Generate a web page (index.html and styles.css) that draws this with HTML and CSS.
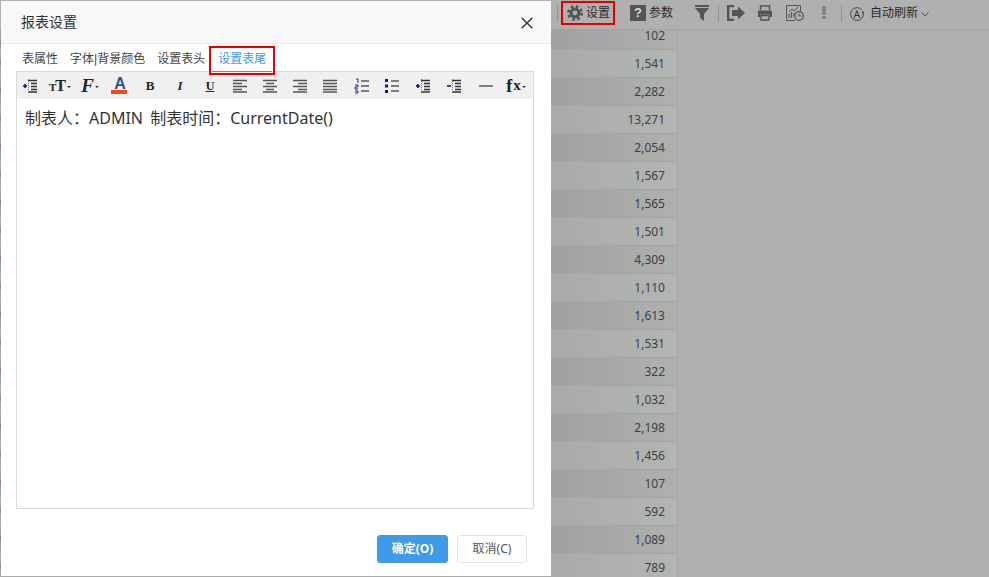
FILE: index.html
```html
<!DOCTYPE html>
<html lang="zh-CN">
<head>
<meta charset="utf-8">
<title>报表设置</title>
<link rel="stylesheet" href="styles.css">
</head>
<body>
<div class="page">
  <header class="topbar">
    <span class="vsep"></span>
    <div class="tool tool-settings">
      <svg class="ic16" viewBox="0 0 16 16"><circle cx="8" cy="8" r="6.3" fill="none" stroke="#555" stroke-width="3.2" stroke-dasharray="2.5 2.45"/><circle cx="8" cy="8" r="3.9" fill="none" stroke="#555" stroke-width="3"/></svg>
      <span>设置</span>
    </div>
    <div class="tool tool-param"><span class="qmark">?</span><span>参数</span></div>
    <svg class="ic-filter" viewBox="0 0 14 16"><path d="M0 0h14v2H0zM0 3h14L9 9v7l-4-3V9z" fill="#555"/></svg>
    <span class="vsep vsep-a"></span>
    <svg class="ic-exit" viewBox="0 0 18 16"><path d="M7 1H1.200v14H7" fill="none" stroke="#555" stroke-width="2.400"/><path d="M5 5h6V1.500L18 8l-7 6.500V11H5z" fill="#555"/></svg>
    <svg class="ic-print" viewBox="0 0 16 16"><path d="M3.500 5V1h9v4" fill="none" stroke="#555" stroke-width="1.500"/><path d="M1 6.500a1 1 0 0 1 1-1h12a1 1 0 0 1 1 1V12h-2V9.500H3V12H1z" fill="#555"/><path d="M4 10.500h8V15H4z" fill="none" stroke="#555" stroke-width="1.500"/></svg>
    <svg class="ic-chart" viewBox="0 0 18 16"><path d="M9 15.500H.5V.5h14V7" fill="none" stroke="#555"/><path d="M3 13V9M5.500 13V7M8 11V8" stroke="#555" stroke-width="1.200"/><path d="M3 7l3-3 2 2 4-4" fill="none" stroke="#555"/><circle cx="13" cy="11" r="4.300" fill="#b0b0b0" stroke="#555" stroke-width="1.300"/><path d="M13 8.500V11h2.500" fill="none" stroke="#555"/></svg>
    <svg class="ic-warn" viewBox="0 0 4 13"><path d="M0 0h4v9H0zM0 10h4v3H0z" fill="#868686"/></svg>
    <span class="vsep vsep-b"></span>
    <span class="auto-ic"><svg class="auto-ring" viewBox="0 0 14 14"><path d="M11.800 2.800A6.400 6.400 0 1 0 13.400 7" fill="none" stroke="#444"/><path d="M12 4.500h2V6.500h-2z" fill="#444"/></svg><span class="auto-a">A</span></span>
    <span class="auto-text">自动刷新</span>
    <svg class="ic-chev" viewBox="0 0 8 5"><path d="M.5.5 4 4 7.500.5" fill="none" stroke="#555"/></svg>
  </header>

  <main class="report">
    <div class="rows">
      <div class="row">102</div>
      <div class="row">1,541</div>
      <div class="row">2,282</div>
      <div class="row">13,271</div>
      <div class="row">2,054</div>
      <div class="row">1,567</div>
      <div class="row">1,565</div>
      <div class="row">1,501</div>
      <div class="row">4,309</div>
      <div class="row">1,110</div>
      <div class="row">1,613</div>
      <div class="row">1,531</div>
      <div class="row">322</div>
      <div class="row">1,032</div>
      <div class="row">2,198</div>
      <div class="row">1,456</div>
      <div class="row">107</div>
      <div class="row">592</div>
      <div class="row">1,089</div>
      <div class="row">789</div>
    </div>
  </main>

  <section class="dialog">
    <div class="dlg-head">
      <span class="dlg-title">报表设置</span>
      <svg class="dlg-close" viewBox="0 0 12 12"><path d="M.7.7l10.600 10.600M11.300.7.700 11.300" stroke="#333" stroke-width="1.400"/></svg>
    </div>
    <nav class="tabs">
      <span class="tab">表属性</span>
      <span class="tab">字体<span class="pipe">|</span>背景颜色</span>
      <span class="tab">设置表头</span>
      <span class="tab tab-on">设置表尾</span>
    </nav>
    <div class="editor">
      <div class="etools">
        <span class="eb"><svg viewBox="0 0 16 16"><path d="M6 2.500h9M9 5.500h6M9 8.500h6M9 11.500h6M6 14h9" stroke="#333" stroke-width="1.500"/><path d="M6.500 1v14" stroke="#777" stroke-dasharray="1 1"/><path d="M1 8h4M3 6v4" stroke="#11a" stroke-width="1.600"/></svg></span>
        <span class="eb eb-t"><span class="t-small">T</span><span class="t-big">T</span><i class="caret"></i></span>
        <span class="eb eb-f"><span class="f-letter">F</span><i class="caret"></i></span>
        <span class="eb eb-a"><span class="a-letter">A</span><i class="a-bar"></i></span>
        <span class="eb eb-b">B</span>
        <span class="eb eb-i">I</span>
        <span class="eb eb-u">U</span>
        <span class="eb"><svg viewBox="0 0 16 16"><path d="M1 2.500h14M1 5.500h9M1 8.500h14M1 11.500h9M1 14h14" stroke="#555" stroke-width="1.500"/></svg></span>
        <span class="eb"><svg viewBox="0 0 16 16"><path d="M1 2.500h14M4 5.500h8M1 8.500h14M4 11.500h8M1 14h14" stroke="#555" stroke-width="1.500"/></svg></span>
        <span class="eb"><svg viewBox="0 0 16 16"><path d="M1 2.500h14M6 5.500h9M1 8.500h14M6 11.500h9M1 14h14" stroke="#555" stroke-width="1.500"/></svg></span>
        <span class="eb"><svg viewBox="0 0 16 16"><path d="M1 2.500h14M1 5.500h14M1 8.500h14M1 11.500h14M1 14h14" stroke="#555" stroke-width="1.500"/></svg></span>
        <span class="eb eb-g2"><svg viewBox="0 0 16 16"><path d="M7 3h8M7 8h8M7 13h8" stroke="#555" stroke-width="1.300"/><path d="M2 1h2v4M1 7h3v2H1v2h3M1 13h3v2H1" fill="none" stroke="#22239a"/></svg></span>
        <span class="eb"><svg viewBox="0 0 16 16"><path d="M7 3h8M7 8h8M7 13h8" stroke="#555" stroke-width="1.300"/><path d="M1 1h3v3H1zM1 6.500h3v3H1zM1 12h3v3H1z" fill="#14148c"/></svg></span>
        <span class="eb eb-g1"><svg viewBox="0 0 16 16"><path d="M6 2.500h9M9 5.500h6M9 8.500h6M9 11.500h6M6 14h9" stroke="#333" stroke-width="1.500"/><path d="M6.500 1v14" stroke="#777" stroke-dasharray="1 1"/><path d="M1 8h4M3 6v4" stroke="#11a" stroke-width="1.600"/></svg></span>
        <span class="eb eb-g1"><svg viewBox="0 0 16 16"><path d="M6 2.500h9M9 5.500h6M9 8.500h6M9 11.500h6M6 14h9" stroke="#333" stroke-width="1.500"/><path d="M6.500 1v14" stroke="#777" stroke-dasharray="1 1"/><path d="M1 8h4" stroke="#11a" stroke-width="1.600"/></svg></span>
        <span class="eb eb-g2"><svg viewBox="0 0 16 16"><path d="M1 8h14" stroke="#666" stroke-width="1.600"/></svg></span>
        <span class="eb eb-fx"><span class="fx-f">f</span><span class="fx-x">x</span><i class="caret"></i></span>
      </div>
      <div class="ebody">制表人：ADMIN 制表时间：CurrentDate()</div>
    </div>
    <footer class="dlg-foot">
      <button class="btn btn-ok" type="button">确定(O)</button>
      <button class="btn btn-cancel" type="button">取消(C)</button>
    </footer>
  </section>
</div>
</body>
</html>
```
FILE: styles.css
```css
* { box-sizing: border-box; }
html, body { margin: 0; padding: 0; }
body {
  font-family: "Noto Sans", "Noto Sans CJK SC", sans-serif;
  font-size: 12px;
  color: #333;
  background: #b0b0b0;
}
.page {
  position: relative;
  width: 989px;
  height: 577px;
  overflow: hidden;
  background: #b0b0b0;
}

/* top toolbar */
.topbar {
  display: flex;
  align-items: center;
  height: 30px;
  padding: 0 0 4px 557px;
  border-bottom: 1px solid #a2a2a2;
  color: #2a2a2a;
  line-height: 20px;
}
.vsep { width: 1px; height: 18px; background: #949494; flex: none; }
.tool { display: flex; align-items: center; height: 20px; flex: none; }
.tool-settings {
  margin-left: 5px;
  width: 50px;
  padding-left: 4px;
  gap: 3px;
  outline: 2px solid #e60000;
}
.ic16 { width: 16px; height: 16px; flex: none; }
.tool-param { margin-left: 17px; gap: 3px; }
.qmark {
  width: 16px;
  height: 16px;
  background: #555;
  color: #ddd;
  font: bold 13px/16px "Liberation Sans", sans-serif;
  text-align: center;
}
.ic-filter { width: 14px; height: 16px; margin-left: 22px; flex: none; }
.vsep-a { margin-left: 9px; }
.ic-exit { width: 18px; height: 16px; margin-left: 8px; flex: none; }
.ic-print { width: 16px; height: 16px; margin-left: 12px; flex: none; }
.ic-chart { width: 18px; height: 16px; margin-left: 13px; flex: none; }
.ic-warn { width: 4px; height: 13px; margin-left: 18px; flex: none; }
.vsep-b { margin-left: 15px; }
.auto-ic { position: relative; display: block; width: 14px; height: 14px; margin-left: 8px; flex: none; top: 1px; }
.auto-ring { display: block; width: 14px; height: 14px; }
.auto-a {
  position: absolute;
  left: 0;
  right: 0;
  top: 0;
  text-align: center;
  font-size: 10px;
  line-height: 14px;
  color: #333;
}
.auto-text { margin-left: 6px; flex: none; }
.ic-chev { width: 8px; height: 5px; margin-left: 3px; flex: none; margin-top: 3px; }

/* report rows behind the mask */
.report { width: 678px; border-right: 1px solid #a6a6a6; }
.row {
  position: relative;
  height: 28px;
  padding-right: 12px;
  border-bottom: 1px solid #a4a6a4;
  text-align: right;
  line-height: 27px;
  color: #3c4046;
  background: linear-gradient(90deg, #a9aba9 550px, #b3b5b3 677px);
}
.row:nth-child(odd) { background: linear-gradient(90deg, #9fa19f 550px, #afb1af 677px); }
.row:first-child { height: 20px; line-height: 11px; }
.row::before {
  content: "";
  position: absolute;
  left: 0;
  top: 10px;
  width: 1px;
  height: 5px;
  background: #a67f70;
}

/* dialog */
.dialog {
  position: absolute;
  left: 1px;
  top: 1px;
  width: 550px;
  height: 575px;
  display: flex;
  flex-direction: column;
  background: #fff;
}
.dlg-head {
  display: flex;
  align-items: center;
  justify-content: space-between;
  height: 43px;
  padding: 0 18px 0 20px;
  background: #f8f8f8;
  border-bottom: 1px solid #ececec;
  flex: none;
}
.dlg-title { font-size: 14px; color: #333; margin-top: -2px; }
.dlg-close { width: 12px; height: 12px; margin-top: 1px; }
.tabs {
  display: flex;
  padding: 5px 0 0 15px;
  margin-bottom: -1px;
  flex: none;
  position: relative;
  z-index: 1;
}
.tab {
  height: 23px;
  padding: 0 6px;
  line-height: 20px;
  color: #444;
  white-space: nowrap;
}
.pipe { font-family: "Liberation Sans", sans-serif; }
.tab-on {
  margin-left: 1px;
  color: #3d9be9;
  border-bottom: 1px solid #3d9be9;
  outline: 2px solid #e60000;
  outline-offset: 1px;
}
.editor {
  flex: 1;
  margin: 0 17px 0 15px;
  border: 1px solid #dcdad5;
  display: flex;
  flex-direction: column;
  min-height: 0;
}
.etools {
  display: flex;
  align-items: center;
  gap: 4px;
  height: 27px;
  background: #f0f0f0;
  flex: none;
}
.eb {
  position: relative;
  display: flex;
  align-items: center;
  justify-content: center;
  width: 26px;
  height: 27px;
  flex: none;
  font-family: "Liberation Serif", serif;
  color: #222;
  line-height: 1;
}
.eb svg { width: 16px; height: 16px; display: block; }
.eb-g2 { margin-left: 2px; }
.eb-g1 { margin-left: 1px; }
.caret {
  display: block;
  width: 0;
  height: 0;
  margin-left: 1px;
  margin-top: 3px;
  border: 2px solid transparent;
  border-top-color: #333;
  border-bottom-width: 0;
  align-self: center;
}
.t-small { font-size: 11px; font-weight: bold; margin-top: 3px; }
.t-big { font-size: 16px; font-weight: bold; margin-left: -1px; }
.f-letter { font-size: 19px; font-weight: bold; font-style: italic; color: #222; }
.a-letter { font-size: 16px; font-weight: bold; color: #2f4f9a; margin-top: -4px; font-family: "Liberation Sans", sans-serif; }
.a-bar {
  position: absolute;
  left: 4px;
  top: 18px;
  width: 16px;
  height: 4px;
  background: #e8501a;
}
.eb-b { font-size: 13px; font-weight: bold; }
.eb-i { font-size: 13px; font-weight: bold; font-style: italic; }
.eb-u { font-size: 12px; font-weight: bold; text-decoration: underline; }
.fx-f { font-size: 18px; font-weight: bold; }
.fx-x { font-size: 15px; font-weight: bold; margin-left: 1px; }
.ebody {
  flex: 1;
  padding: 7px 8px;
  font-size: 16px;
  line-height: 24px;
  word-spacing: 3px;
  color: #333;
  background: #fff;
}
.dlg-foot {
  display: flex;
  justify-content: flex-end;
  gap: 9px;
  height: 67px;
  padding: 26px 24px 0 0;
  flex: none;
}
.btn {
  height: 28px;
  padding: 0;
  border-radius: 3px;
  font-family: inherit;
  font-size: 12px;
  line-height: 26px;
}
.btn-ok {
  width: 71px;
  background: #3d9be9;
  border: 1px solid #3d9be9;
  color: #fff;
  font-weight: bold;
}
.btn-cancel {
  width: 70px;
  background: #fff;
  border: 1px solid #e4e4e4;
  color: #555;
}
```
